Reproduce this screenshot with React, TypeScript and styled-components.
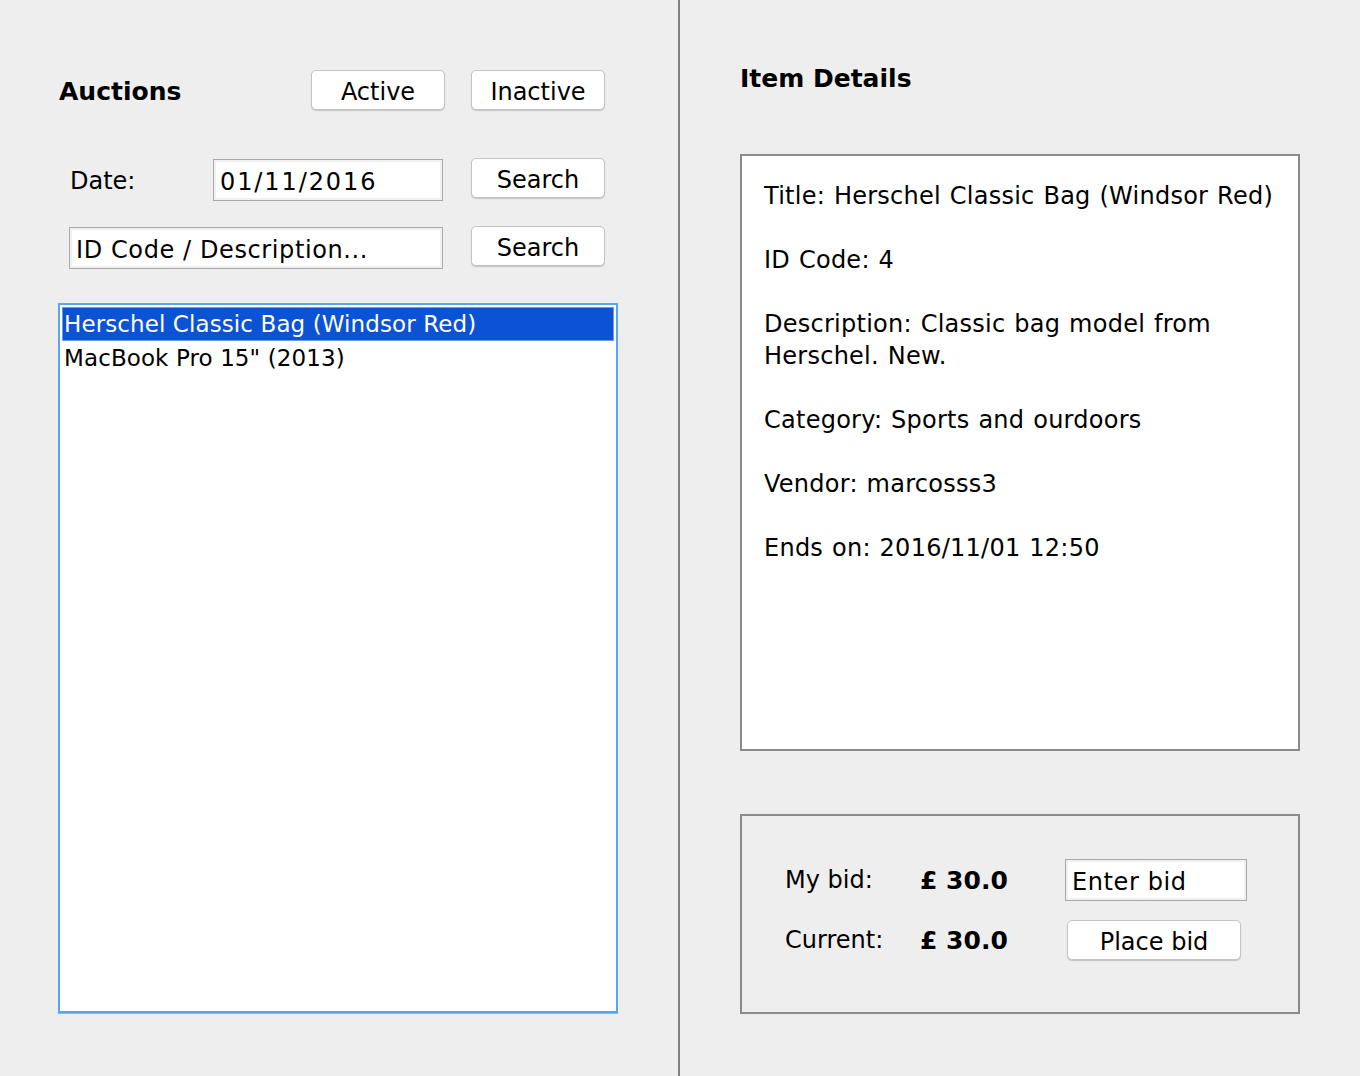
import React from "react";
import styled, { createGlobalStyle } from "styled-components";

const GlobalStyle = createGlobalStyle`
    html, body {
        margin: 0;
        padding: 0;
        background: #eeeeee;
    }
    body {
        font-family: "DejaVu Sans", "Liberation Sans", sans-serif;
        color: #000;
    }
`;

const Window = styled.div`
    display: flex;
    width: 1360px;
    height: 1076px;
    background: #eeeeee;
    overflow: hidden;
`;

const LeftPanel = styled.div`
    width: 560px;
    padding: 70px 0 0 58px;
    flex-shrink: 0;
    display: flex;
    flex-direction: column;
`;

const Divider = styled.div`
    width: 2px;
    margin-left: 60px;
    background: #808080;
    flex-shrink: 0;
`;

const RightPanel = styled.div`
    width: 560px;
    padding: 61px 0 0 60px;
    display: flex;
    flex-direction: column;
`;

const Heading = styled.h2`
    margin: 0;
    font-size: 25px;
    font-weight: bold;
    line-height: 35px;
`;

const Row = styled.div<{ $top?: number; $height: number }>`
    display: flex;
    align-items: flex-start;
    margin-top: ${(p) => p.$top ?? 0}px;
    height: ${(p) => p.$height}px;
`;

const Button = styled.button<{ $width?: number; $left?: number }>`
    width: ${(p) => p.$width ?? 134}px;
    height: 40px;
    margin-left: ${(p) => p.$left ?? 0}px;
    padding: 3px 0 0 0;
    background: #ffffff;
    border: 1px solid #c4c4c4;
    border-radius: 5px;
    box-shadow: 0 1px 1px rgba(0, 0, 0, 0.18);
    font-family: inherit;
    font-size: 24px;
    color: #000;
    flex-shrink: 0;
`;

const Field = styled.div<{ $width: number; $left?: number; $spacing?: number; $top?: number }>`
    box-sizing: border-box;
    width: ${(p) => p.$width}px;
    height: 42px;
    margin-left: ${(p) => p.$left ?? 0}px;
    margin-top: ${(p) => p.$top ?? 0}px;
    padding: 3px 6px 0 6px;
    display: flex;
    align-items: center;
    background: #ffffff;
    border: 1px solid #a8a8a8;
    box-shadow: inset 0 0 0 2px #f0f0f0;
    font-size: 24px;
    letter-spacing: ${(p) => p.$spacing ?? 0.6}px;
    white-space: nowrap;
    flex-shrink: 0;
`;

const Label = styled.span<{ $left?: number; $width?: number; $top?: number }>`
    margin-left: ${(p) => p.$left ?? 0}px;
    margin-top: ${(p) => p.$top ?? 0}px;
    width: ${(p) => (p.$width ? `${p.$width}px` : "auto")};
    font-size: 24px;
    flex-shrink: 0;
`;

const ListBox = styled.div`
    box-sizing: border-box;
    margin-top: 33px;
    width: 560px;
    height: 710px;
    padding: 2px;
    background: #ffffff;
    border: 2px solid #5aa6ec;
    box-shadow: 0 1px 0 #7cb8f0;
`;

const ListItem = styled.div<{ $selected?: boolean }>`
    height: 32px;
    line-height: 32px;
    padding-left: 1px;
    font-size: 23px;
    letter-spacing: 0.1px;
    white-space: nowrap;
    background: ${(p) => (p.$selected ? "#0b52d4" : "transparent")};
    color: ${(p) => (p.$selected ? "#ffffff" : "#000000")};
    border: ${(p) => (p.$selected ? "1px solid #6b9be8" : "1px solid transparent")};
`;

const DetailsBox = styled.div`
    box-sizing: border-box;
    margin-top: 58px;
    width: 560px;
    height: 597px;
    padding: 24px 16px 0 22px;
    background: #ffffff;
    border: 2px solid #8a8a8a;
`;

const DetailLine = styled.p`
    margin: 0 0 32px 0;
    font-size: 24px;
    line-height: 32px;
    letter-spacing: 0.25px;
    word-spacing: 1px;
`;

const BidBox = styled.div`
    box-sizing: border-box;
    margin-top: 63px;
    width: 560px;
    height: 200px;
    padding: 34px 0 0 43px;
    border: 2px solid #8a8a8a;
    display: grid;
    grid-template-columns: 135px 145px auto;
    grid-auto-rows: 60px;
    align-items: center;
    align-content: start;
`;

const Amount = styled.span`
    font-size: 25px;
    font-weight: bold;
`;

const items = ["Herschel Classic Bag (Windsor Red)", 'MacBook Pro 15" (2013)'];

const details = [
    "Title: Herschel Classic Bag (Windsor Red)",
    "ID Code: 4",
    "Description: Classic bag model from Herschel. New.",
    "Category: Sports and ourdoors",
    "Vendor: marcosss3",
    "Ends on: 2016/11/01 12:50",
];

const App: React.FC = () => {
    return (
        <>
            <GlobalStyle />
            <Window>
                <LeftPanel>
                    <Row $height={40}>
                        <Label $width={252} $left={1} $top={4}>
                            <Heading as="span">Auctions</Heading>
                        </Label>
                        <Button>Active</Button>
                        <Button $left={26}>Inactive</Button>
                    </Row>
                    <Row $top={48} $height={44}>
                        <Label $left={12} $width={143} $top={9}>
                            Date:
                        </Label>
                        <Field $width={230} $spacing={1.9} $top={1}>
                            01/11/2016
                        </Field>
                        <Button $left={28}>Search</Button>
                    </Row>
                    <Row $top={24} $height={44}>
                        <Field $width={374} $left={11} $top={1}>
                            ID Code / Description...
                        </Field>
                        <Button $left={28}>Search</Button>
                    </Row>
                    <ListBox>
                        {items.map((item, i) => (
                            <ListItem key={i} $selected={i === 0}>
                                {item}
                            </ListItem>
                        ))}
                    </ListBox>
                </LeftPanel>
                <Divider />
                <RightPanel>
                    <Heading>Item Details</Heading>
                    <DetailsBox>
                        {details.map((line, i) => (
                            <DetailLine key={i}>{line}</DetailLine>
                        ))}
                    </DetailsBox>
                    <BidBox>
                        <Label>My bid:</Label>
                        <Amount>£ 30.0</Amount>
                        <Field $width={182}>Enter bid</Field>
                        <Label>Current:</Label>
                        <Amount>£ 30.0</Amount>
                        <Button $width={174} $left={2}>
                            Place bid
                        </Button>
                    </BidBox>
                </RightPanel>
            </Window>
        </>
    );
};

export default App;
